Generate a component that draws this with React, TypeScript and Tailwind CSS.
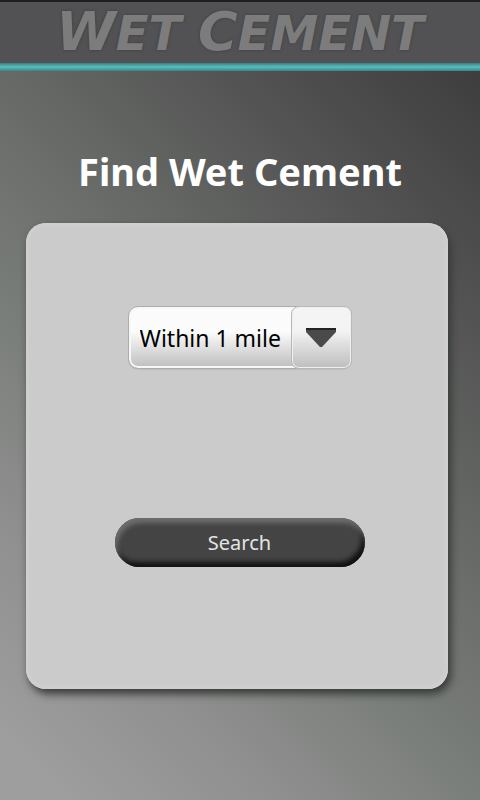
import React from "react";

const distances = ["Within 1 mile", "Within 5 miles", "Within 10 miles", "Within 25 miles"];

function Header() {
  return (
    <header className="flex flex-col border-t-2 border-[#1f1f21] bg-[#525154]">
      <div className="flex h-[61px] items-center justify-center">
        <a
          href="#home"
          className="whitespace-nowrap font-['DejaVu_Sans',sans-serif] text-[48px] leading-[60px] font-bold text-[#7c7c7c] italic [text-shadow:0_0_3px_#3c3c3c]"
        >
          <span className="text-[54px]">W</span>ET <span className="text-[54px]">C</span>EMENT
        </a>
      </div>
      <div className="h-2 bg-linear-to-b from-[#3f7f80] via-[#58bfbf] to-[#3a8585]" />
    </header>
  );
}

function DistanceSelect() {
  return (
    <div className="relative h-[63px] w-56 rounded-[10px] shadow-[0_1px_1px_#bdbdbd]">
      <select
        aria-label="Distance"
        className="h-full w-full appearance-none rounded-[10px] border border-[#adadad] bg-linear-[180deg,#fbfbfb_5%,#fcfcfc_40%,#e9e9e9_58%,#bfbdbf_100%] pt-0.5 pr-[60px] pl-[11px] font-['Noto_Sans',sans-serif] text-[23px] text-black shadow-[inset_0_0_0_2px_#f7f7f7]"
      >
        {distances.map((d) => (
          <option key={d}>{d}</option>
        ))}
      </select>
      <div className="pointer-events-none absolute inset-y-0 right-0 flex w-[61px] items-center justify-center rounded-[8px] border border-[#b9b7b9] bg-linear-[180deg,#f4f4f4_5%,#f3f3f3_40%,#e2e2e2_58%,#bfbdbf_100%] shadow-[inset_0_0_0_1px_#f0f0f0]">
        <svg width="30" height="20" viewBox="0 0 30 20" aria-hidden="true">
          <path d="M0 1H30V4L16 19H14L0 4Z" fill="#4a4a4a" />
          <path d="M0 1H30" stroke="#222" strokeWidth="2" />
        </svg>
      </div>
    </div>
  );
}

export default function App() {
  return (
    <div className="flex min-h-screen flex-col bg-linear-[225deg,#3d3d3d_5%,#525352_25%,#666866_42%,#7a7e7a_62%,#8f8f8f_78%,#9e9e9e_95%]">
      <Header />
      <main className="flex flex-col pt-[72px]">
        <h1 className="text-center font-['Noto_Sans',sans-serif] text-[38px] leading-[56px] font-bold text-white">
          Find Wet Cement
        </h1>
        <form
          onSubmit={(e) => e.preventDefault()}
          className="mt-6 mr-8 ml-[26px] flex flex-col items-center rounded-[20px] bg-[#cbcbcb] pt-[83px] pb-[122px] pl-[5px] shadow-[inset_0_0_3px_3px_#d0d0d0,3px_5px_8px_#363a36]"
        >
          <DistanceSelect />
          <button
            type="submit"
            className="mt-[149px] h-[49px] w-[250px] rounded-full bg-[#444] font-['Noto_Sans',sans-serif] text-xl text-[#e4e4e4] shadow-[inset_2px_5px_5px_#6e6e6e,inset_-3px_-5px_5px_#111]"
          >
            Search
          </button>
        </form>
      </main>
    </div>
  );
}
